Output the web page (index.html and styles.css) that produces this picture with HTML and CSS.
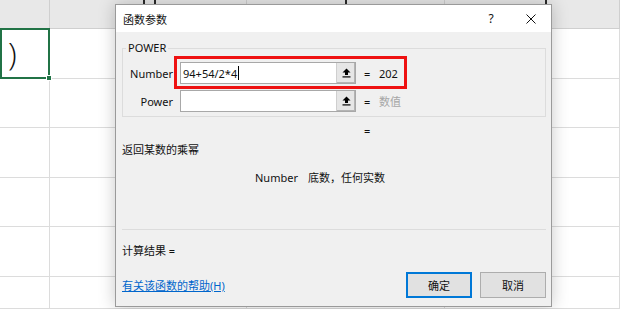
FILE: index.html
```html
<!DOCTYPE html>
<html lang="zh-CN">
<head>
    <meta charset="UTF-8">
    <meta name="viewport" content="width=device-width, initial-scale=1.0">
    <title>函数参数</title>
    <link rel="stylesheet" href="styles.css">
</head>
<body>

    <!-- worksheet behind the dialog -->
    <div class="sheet">
        <div class="cell head"></div>
        <div class="cell head"><span class="mark first"></span><span class="mark next"></span></div>
        <div class="cell head"><span class="mark third"></span></div>
        <div class="cell head"><span class="mark fourth"></span></div>

        <div class="cell selected"><span class="paren">)</span></div>
        <div class="cell"></div>
        <div class="cell"></div>
        <div class="cell"></div>

        <div class="cell"></div><div class="cell"></div><div class="cell"></div><div class="cell"></div>
        <div class="cell"></div><div class="cell"></div><div class="cell"></div><div class="cell"></div>
        <div class="cell"></div><div class="cell"></div><div class="cell"></div><div class="cell"></div>
        <div class="cell"></div><div class="cell"></div><div class="cell"></div><div class="cell"></div>
        <div class="cell"></div><div class="cell"></div><div class="cell"></div><div class="cell"></div>
    </div>

    <div class="dialog">
        <div class="titlebar">
            <span class="title">函数参数</span>
            <span class="help">?</span>
            <svg class="close" width="10" height="10" viewBox="0 0 10 10">
                <path d="M0.5 0.5 L9.5 9.5 M9.5 0.5 L0.5 9.5" stroke="#111" stroke-width="1" fill="none"/>
            </svg>
        </div>

        <div class="content">
            <fieldset class="args">
                <legend>POWER</legend>

                <div class="arg">
                    <label>Number</label>
                    <div class="field">
                        <span class="value">94+54/2*4</span><span class="caret"></span>
                        <span class="pick">
                            <svg width="9" height="10" viewBox="0 0 9 10">
                                <path d="M4.5 0.5 L8.5 4.5 L6 4.5 L6 7 L3 7 L3 4.5 L0.5 4.5 Z" fill="#000"/>
                                <rect x="0.5" y="8.3" width="8" height="1.2" fill="#000"/>
                            </svg>
                        </span>
                    </div>
                    <span class="eq">=</span>
                    <span class="result">202</span>
                    <div class="highlight"></div>
                </div>

                <div class="arg">
                    <label>Power</label>
                    <div class="field">
                        <span class="value"></span>
                        <span class="pick">
                            <svg width="9" height="10" viewBox="0 0 9 10">
                                <path d="M4.5 0.5 L8.5 4.5 L6 4.5 L6 7 L3 7 L3 4.5 L0.5 4.5 Z" fill="#000"/>
                                <rect x="0.5" y="8.3" width="8" height="1.2" fill="#000"/>
                            </svg>
                        </span>
                    </div>
                    <span class="eq">=</span>
                    <span class="result muted">数值</span>
                </div>
            </fieldset>

            <div class="total">=</div>
            <p class="summary">返回某数的乘幂</p>
            <p class="detail"><span class="name">Number</span>底数，任何实数</p>

            <hr class="divider">

            <p class="calc">计算结果 =</p>

            <div class="footer">
                <a class="help-link" href="#">有关该函数的帮助(H)</a>
                <button class="btn primary">确定</button>
                <button class="btn">取消</button>
            </div>
        </div>
    </div>

</body>
</html>
```

FILE: styles.css
```css
body {
    margin: 0;
    width: 620px;
    height: 309px;
    overflow: hidden;
    position: relative;
    background-color: #ffffff;
    font-family: "Noto Sans", "Noto Sans CJK SC", sans-serif;
    font-size: 11px;
    color: #111;
}

/* worksheet */
.sheet {
    display: grid;
    grid-template-columns: 50px 197px 198px 175px;
    grid-template-rows: 29px 50px 49px 50px 49px 50px 32px;
}
.cell {
    box-sizing: border-box;
    border-right: 1px solid #dcdcdc;
    border-bottom: 1px solid #dcdcdc;
}
.cell.head {
    display: flex;
    background-color: #e8e8e8;
    border-right-color: #cfcfcf;
    border-bottom-color: #cfcfcf;
}
.mark {
    width: 2px;
    height: 5px;
    background-color: #2a2a2a;
}
.mark.first { margin-left: 93px; }
.mark.next { margin-left: 9px; }
.mark.third { margin-left: 98px; }
.mark.fourth { margin-left: 100px; }

.cell.selected {
    position: relative;
    border: 2px solid #217346;
    margin: -1px 0 0 0;
    height: 51px;
    padding-left: 6px;
}
.cell.selected::after {
    content: "";
    position: absolute;
    right: -4px;
    bottom: -4px;
    width: 4px;
    height: 4px;
    background-color: #217346;
    border: 1px solid #fff;
}
.paren {
    font-family: "Open Sans", sans-serif;
    font-weight: 300;
    font-size: 32px;
    line-height: 46px;
    color: #111;
}

/* dialog */
.dialog {
    position: absolute;
    left: 115px;
    top: 4px;
    width: 435px;
    border: 1px solid #9a9a9a;
    background-color: #f0f0f0;
    box-shadow: 0 0 16px rgba(0, 0, 0, 0.22);
}
.titlebar {
    display: flex;
    align-items: center;
    height: 27px;
    background-color: #ffffff;
    padding: 0 15px 0 7px;
}
.title {
    flex: 1;
}
.help {
    width: 20px;
    text-align: center;
    font-size: 12px;
}
.close {
    margin-left: 25px;
}

.content {
    padding: 8px 5px 8px 6px;
}

.args {
    margin: 0;
    border: 1px solid #dcdcdc;
    padding: 6px 0 4px 0;
}
.args legend {
    margin-left: 3px;
    padding: 0 2px;
    line-height: 16px;
}
.arg {
    position: relative;
    display: flex;
    align-items: center;
    height: 22px;
}
.arg + .arg {
    margin-top: 6px;
}
.arg label {
    width: 50px;
    margin-right: 7px;
    text-align: right;
}
.field {
    box-sizing: border-box;
    display: flex;
    align-items: center;
    width: 176px;
    height: 22px;
    background-color: #ffffff;
    border: 1px solid #a8a8a8;
}
.value {
    padding-left: 2px;
}
.caret {
    width: 1px;
    height: 14px;
    margin-left: 1px;
    background-color: #000;
}
.pick {
    box-sizing: border-box;
    display: flex;
    align-items: center;
    justify-content: center;
    margin-left: auto;
    width: 19px;
    height: 20px;
    background-color: #e6e6e6;
    border-left: 1px solid #cfcfcf;
    box-shadow: inset -1px -1px 0 #b4b4b4;
}
.eq {
    width: 15px;
    margin-left: 8px;
}
.result.muted {
    color: #a6a6a6;
}
.highlight {
    position: absolute;
    left: 51px;
    top: -6px;
    width: 233px;
    height: 33px;
    box-sizing: border-box;
    border: 3px solid #ee1111;
}

.total,
.summary,
.detail,
.calc {
    margin: 0;
    line-height: 16px;
}
.total {
    margin-top: 6px;
    padding-left: 242px;
}
.summary {
    margin-top: 3px;
}
.detail {
    margin-top: 12px;
    padding-left: 133px;
}
.detail .name {
    margin-right: 10px;
}
.divider {
    margin: 43px 0 0 0;
    border: 0;
    border-top: 1px solid #dcdcdc;
    height: 0;
}
.calc {
    margin-top: 13px;
}

.footer {
    display: flex;
    align-items: center;
    gap: 8px;
    margin-top: 13px;
    height: 26px;
}
.help-link {
    margin-right: auto;
    color: #0066cc;
    text-decoration: underline;
}
.btn {
    box-sizing: border-box;
    width: 66px;
    height: 26px;
    font-family: inherit;
    font-size: 11px;
    color: #111;
    background-color: #e1e1e1;
    border: 1px solid #adadad;
    padding: 0;
}
.btn.primary {
    border: 2px solid #0078d7;
}
```
